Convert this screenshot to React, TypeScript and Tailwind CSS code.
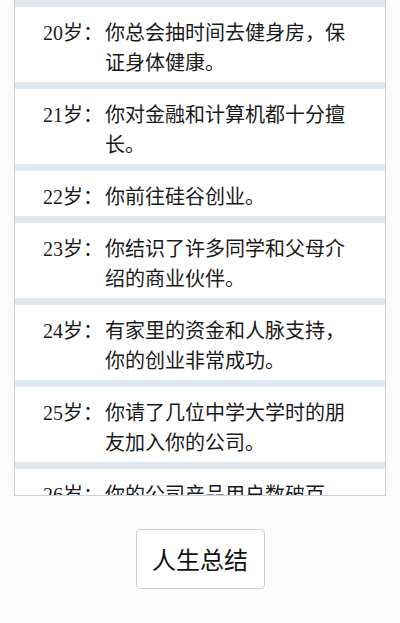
const events: { age: number; text: string }[] = [
  { age: 20, text: '你总会抽时间去健身房，保证身体健康。' },
  { age: 21, text: '你对金融和计算机都十分擅长。' },
  { age: 22, text: '你前往硅谷创业。' },
  { age: 23, text: '你结识了许多同学和父母介绍的商业伙伴。' },
  { age: 24, text: '有家里的资金和人脉支持，你的创业非常成功。' },
  { age: 25, text: '你请了几位中学大学时的朋友加入你的公司。' },
  { age: 26, text: '你的公司产品用户数破百万。' },
];

export default function App() {
  return (
    <div
      className="w-[400px] h-[623px] bg-[#fcfcfc] overflow-hidden"
      style={{ fontFamily: '"Liberation Serif", "Noto Sans CJK SC", serif' }}
    >
      {/* scrolling life log */}
      <div className="ml-[14px] w-[372px] h-[496px] overflow-hidden bg-[#dde8f1] border-x border-b border-[#c6d3dc]">
        {events.map(e => (
          <div key={e.age} className="mt-[7px] first:mt-0 first:border-t-[7px] first:border-[#dde8f1] bg-white pt-[11px] pb-[4px] pl-[28px] pr-[30px] flex gap-[2px] text-[20px] leading-[30px] text-[#1a1a1a]">
            <span className="shrink-0">{e.age}岁：</span>
            <p className="flex-1">{e.text}</p>
          </div>
        ))}
      </div>

      <div className="flex justify-center mt-[33px]">
        <button
          className="w-[129px] h-[60px] rounded-[4px] border border-[#cfcfcf] bg-white text-[24px] text-[#111]"
          style={{ fontFamily: '"Noto Sans CJK SC", sans-serif' }}
        >
          人生总结
        </button>
      </div>
    </div>
  );
}
